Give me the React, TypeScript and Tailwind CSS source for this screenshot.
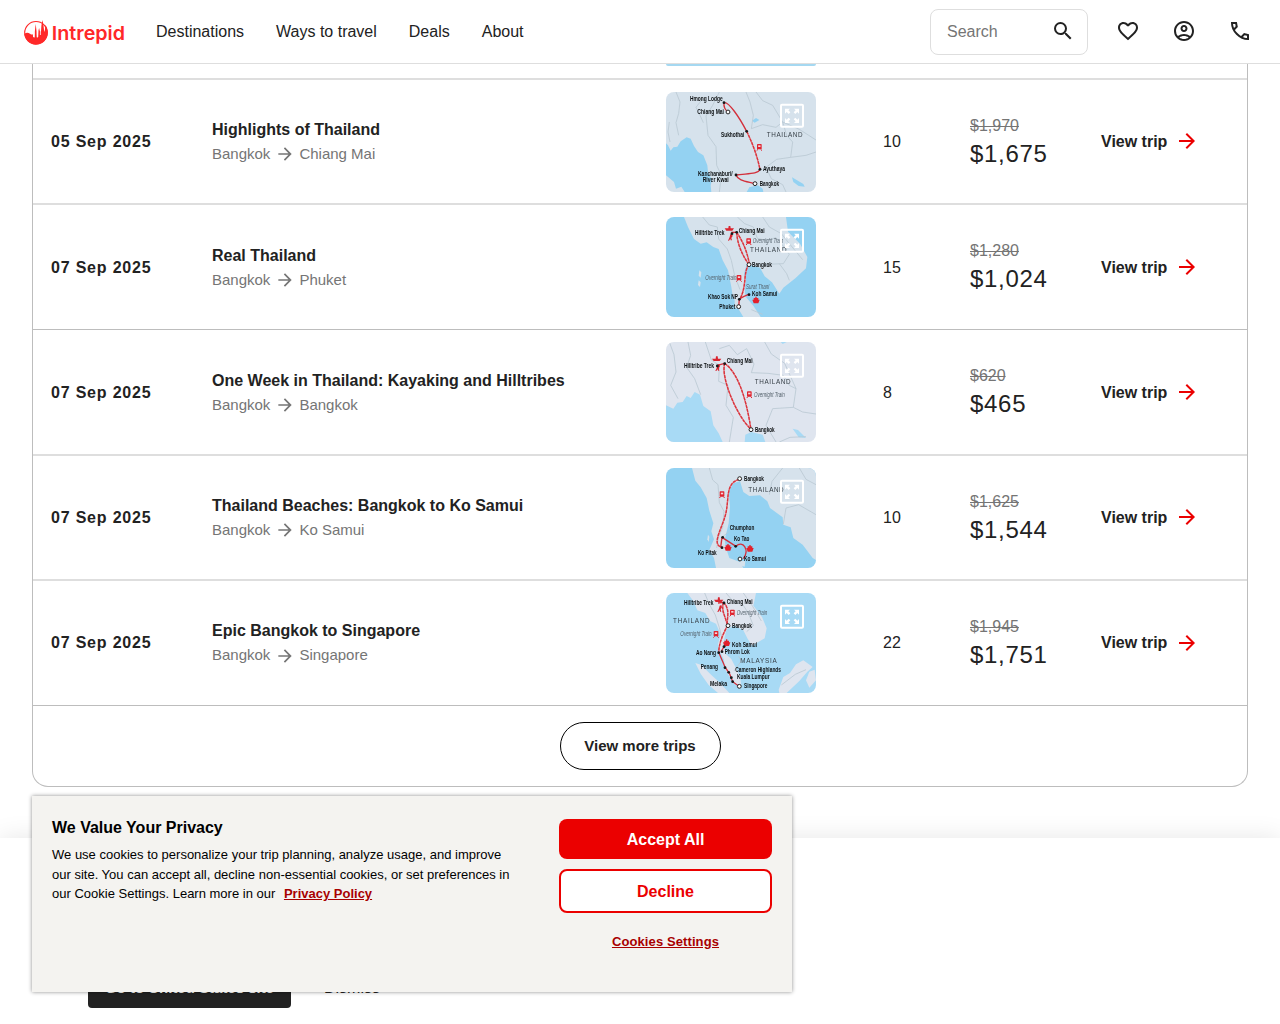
import React from "react";
import { MdSearch, MdFavoriteBorder, MdOutlineAccountCircle, MdArrowForward } from "react-icons/md";

type Label = { x: number; y: number; w: number; t: string; kind?: "country" | "note" };
type MapArt = {
  land: string;
  sea: string;
  bg: string;
  shapes: string[];
  waters?: string[];
  borders: string[];
  routes: string[];
  dashed?: string[];
  dots: [number, number][];
  rings: [number, number][];
  trains?: [number, number][];
  boats?: [number, number][];
  kayak?: [number, number];
  labels: Label[];
};

const highlights: MapArt = {
  land: "#d6e2ec", sea: "#94d2f2", bg: "#d6e2ec",
  shapes: [],
  waters: [
    "M0 154 L6 160 L14 176 L22 166 L34 164 L44 148 L62 136 L74 140 L84 162 L96 180 L112 190 L124 220 L126 240 L138 264 L134 280 L136 300 L56 300 L46 284 L30 290 L24 270 L0 250Z",
    "M242 300 L250 286 L276 280 L290 290 L292 300Z",
    "M378 256 L392 264 L412 276 L416 284 L398 282 L382 270Z",
    "M258 86 L270 78 L280 84 L266 92Z",
  ],
  borders: [
    "M30 0 L42 30 L38 64 L30 92 L38 130",
    "M10 90 L6 120 L12 150",
    "M110 20 L90 46 L102 70 L112 92",
    "M160 0 L140 40 L120 72 L126 130 L150 164 L152 220 L166 250 L160 300",
    "M240 0 L252 30 L262 70 L256 110 L290 98 L330 106 L350 90 L362 130 L380 150 L374 196 L332 202 L300 226",
    "M270 0 L290 26 L320 40 L350 90 L400 112 L450 144",
    "M374 196 L420 190 L450 180",
    "M300 226 L316 260 L350 278 L360 300",
  ],
  routes: [
    "M174 32 Q172 50 186 60",
    "M174 32 C188 28 220 76 242 118",
    "M282 232 C276 248 240 244 210 249 C216 266 240 268 266 275",
  ],
  dashed: ["M242 118 Q270 174 282 232"],
  dots: [[174, 32], [242, 118], [282, 232], [210, 249]],
  rings: [[186, 60], [267, 275]],
  trains: [[280, 166]],
  labels: [
    { x: 72, y: 28, w: 98, t: "Hmong Lodge" },
    { x: 94, y: 67, w: 80, t: "Chiang Mai" },
    { x: 165, y: 134, w: 70, t: "Sukhothai" },
    { x: 302, y: 134, w: 108, t: "THAILAND", kind: "country" },
    { x: 291, y: 238, w: 66, t: "Ayuthaya" },
    { x: 96, y: 252, w: 104, t: "Kanchanaburi/" },
    { x: 110, y: 270, w: 78, t: "River Kwai" },
    { x: 281, y: 281, w: 58, t: "Bangkok" },
  ],
};

const real: MapArt = {
  land: "#d6e2ec", sea: "#94d2f2", bg: "#94d2f2",
  shapes: [
    "M54 0 L66 30 L84 66 L104 80 L122 76 L142 90 L158 96 L170 130 L186 160 L196 210 L200 236 L214 270 L232 300 L284 300 L262 266 L238 238 L236 212 L240 190 L234 170 L242 142 L264 148 L282 152 L296 178 L318 196 L340 230 L352 212 L388 184 L420 154 L424 120 L402 80 L366 44 L360 0Z",
    "M206 252 L216 256 L212 276 L206 270Z",
    "M100 160 L106 166 L104 182 L98 176Z",
    "M98 190 L104 196 L102 210 L96 204Z",
  ],
  borders: [
    "M110 0 L130 24 L154 30 L158 66 L184 96 L196 130 L206 176 L222 218",
    "M214 0 L236 20 L262 30 L274 64 L300 70 L330 62 L354 90 L370 112 L352 140 L300 142 L282 152",
    "M290 0 L310 30 L346 50 L370 80 L410 128",
    "M340 140 L362 170 L370 190",
    "M256 278 L290 292",
  ],
  routes: ["M196 46 L212 46", "M220 246 Q232 238 248 232", "M220 246 L218 270"],
  dashed: [
    "M212 46 C214 80 226 110 248 142",
    "M212 46 C226 66 242 96 250 140",
    "M248 142 C230 172 244 204 222 246",
  ],
  dots: [[212, 46], [220, 247], [249, 233], [198, 50]],
  rings: [[249, 143], [218, 269]],
  trains: [[248, 74], [219, 184]],
  boats: [[270, 250]],
  kayak: [190, 38],
  labels: [
    { x: 87, y: 54, w: 88, t: "Hilltribe Trek" },
    { x: 218, y: 47, w: 78, t: "Chiang Mai" },
    { x: 260, y: 79, w: 92, t: "Overnight Train", kind: "note" },
    { x: 252, y: 106, w: 110, t: "THAILAND", kind: "country" },
    { x: 258, y: 150, w: 60, t: "Bangkok" },
    { x: 118, y: 190, w: 94, t: "Overnight Train", kind: "note" },
    { x: 240, y: 217, w: 70, t: "Surat Thani", kind: "note" },
    { x: 126, y: 247, w: 90, t: "Khao Sok NP" },
    { x: 258, y: 236, w: 76, t: "Koh Samui" },
    { x: 160, y: 275, w: 48, t: "Phuket" },
  ],
};

const week: MapArt = {
  land: "#dfe5ef", sea: "#a8daf5", bg: "#dfe5ef",
  shapes: [],
  waters: [
    "M0 190 L22 200 L34 182 L50 180 L62 162 L74 168 L86 150 L102 158 L112 192 L134 208 L142 250 L158 274 L170 300 L0 300Z",
    "M236 300 L238 278 L256 270 L290 278 L298 300Z",
    "M380 260 L396 264 L420 288 L398 286Z",
    "M344 0 L350 6 L362 0Z",
  ],
  borders: [
    "M10 0 L24 38 L30 90 L14 130 L36 170",
    "M66 0 L74 40 L62 76 L86 110 L104 158",
    "M118 0 L136 54 L160 70 L158 118 L186 130 L180 190 L202 226 L190 300",
    "M160 20 L190 10 L214 38 L242 20 L264 66 L256 92 L306 94 L352 100 L370 130 L390 140 L382 196 L320 200 L300 250 L330 300",
    "M296 0 L316 36 L356 64 L390 140",
    "M450 216 L410 210 L382 196",
    "M340 300 L372 286 L420 284",
  ],
  routes: ["M154 70 L176 64", "M154 74 L158 82"],
  dashed: ["M176 64 C164 104 210 220 255 262", "M176 64 C212 90 238 154 255 262"],
  dots: [[154, 72], [176, 65]],
  rings: [[255, 263]],
  trains: [[250, 158]],
  kayak: [152, 54],
  labels: [
    { x: 54, y: 77, w: 90, t: "Hilltribe Trek" },
    { x: 182, y: 64, w: 78, t: "Chiang Mai" },
    { x: 266, y: 126, w: 108, t: "THAILAND", kind: "country" },
    { x: 264, y: 164, w: 92, t: "Overnight Train", kind: "note" },
    { x: 267, y: 269, w: 59, t: "Bangkok" },
  ],
};

const beaches: MapArt = {
  land: "#d6e2ec", sea: "#94d2f2", bg: "#94d2f2",
  shapes: [
    "M78 0 L88 38 L104 58 L122 90 L130 128 L142 166 L136 190 L144 214 L130 246 L144 270 L150 300 L232 300 L222 282 L190 270 L180 240 L176 216 L188 166 L192 116 L188 70 L202 46 L222 40 L232 72 L250 84 L282 82 L304 100 L312 120 L350 148 L352 170 L374 178 L382 210 L410 230 L440 270 L450 276 L450 0Z",
    "M222 278 L238 280 L236 296 L222 292Z",
    "M126 200 L130 206 L128 222 L124 214Z",
  ],
  borders: [
    "M130 0 L140 36 L156 50 L160 104 L174 130 L170 178 L158 206 L152 240",
    "M310 80 L318 40 L350 0",
    "M352 168 L360 120 L398 110 L450 140",
    "M400 0 L420 34 L450 50",
    "M190 190 L170 206", "M218 220 L210 234",
  ],
  routes: ["M168 208 L210 235 C230 214 252 246 232 272", "M168 208 L164 238"],
  dashed: ["M220 34 C180 44 188 90 182 122 C178 168 130 230 168 238"],
  dots: [[170, 208], [168, 239], [209, 235]],
  rings: [[221, 32], [222, 273]],
  trains: [[168, 80]],
  boats: [[186, 239], [252, 242]],
  labels: [
    { x: 234, y: 38, w: 60, t: "Bangkok" },
    { x: 247, y: 72, w: 106, t: "THAILAND", kind: "country" },
    { x: 191, y: 187, w: 74, t: "Chumphon" },
    { x: 204, y: 219, w: 46, t: "Ko Tao" },
    { x: 96, y: 262, w: 56, t: "Ko Pitak" },
    { x: 234, y: 280, w: 66, t: "Ko Samui" },
  ],
};

const epic: MapArt = {
  land: "#dfe5ef", sea: "#a8daf5", bg: "#a8daf5",
  shapes: [
    "M64 0 L82 24 L94 52 L118 60 L132 84 L150 92 L164 124 L156 154 L162 176 L174 200 L176 226 L190 250 L206 272 L226 278 L222 250 L210 226 L196 198 L180 184 L172 160 L176 132 L182 108 L204 98 L232 112 L244 136 L258 158 L296 136 L302 106 L288 72 L262 38 L270 0Z",
    "M88 210 L106 216 L136 246 L160 268 L190 300 L156 300 L128 276 L104 242Z",
    "M338 290 L352 252 L372 240 L390 214 L412 202 L440 222 L424 236 L400 264 L362 300 L340 300Z",
    "M430 236 L446 230 L450 262 L430 284 L420 262Z",
  ],
  borders: [
    "M116 0 L130 34 L148 66 L160 104 L168 136",
    "M180 0 L204 28 L230 34 L248 62 L262 98 L242 116",
    "M232 0 L260 40 L286 84",
    "M204 234 L226 204 L218 190",
    "M346 276 L388 244 L420 230",
  ],
  routes: ["M158 178 L178 224 L190 240 L200 266 L218 279", "M156 30 L172 28", "M166 174 L174 162 L182 156"],
  dashed: ["M172 28 C164 56 180 70 184 98", "M172 28 C194 48 182 74 184 98 C176 116 160 140 158 178"],
  dots: [[174, 30], [158, 179], [168, 176], [177, 224], [188, 238], [196, 254], [200, 266], [174, 161]],
  rings: [[186, 98], [220, 280]],
  trains: [[199, 60], [150, 124]],
  boats: [[182, 150]],
  kayak: [158, 24],
  labels: [
    { x: 54, y: 37, w: 88, t: "Hilltribe Trek" },
    { x: 182, y: 34, w: 78, t: "Chiang Mai" },
    { x: 212, y: 65, w: 92, t: "Overnight Train", kind: "note" },
    { x: 21, y: 91, w: 110, t: "THAILAND", kind: "country" },
    { x: 198, y: 105, w: 60, t: "Bangkok" },
    { x: 43, y: 129, w: 94, t: "Overnight Train", kind: "note" },
    { x: 198, y: 162, w: 75, t: "Koh Samui" },
    { x: 90, y: 185, w: 60, t: "Ao Nang" },
    { x: 176, y: 184, w: 75, t: "Phrom Lok" },
    { x: 223, y: 210, w: 109, t: "MALAYSIA", kind: "country" },
    { x: 104, y: 229, w: 52, t: "Penang" },
    { x: 208, y: 237, w: 137, t: "Cameron Highlands" },
    { x: 213, y: 258, w: 98, t: "Kuala Lumpur" },
    { x: 132, y: 280, w: 51, t: "Melaka" },
    { x: 234, y: 286, w: 70, t: "Singapore" },
  ],
};

function RouteMap({ art }: { art: MapArt }) {
  return (
    <svg viewBox="0 0 450 300" className="h-[100px] w-[150px] rounded-lg" fontFamily="'Liberation Sans', Arial, sans-serif">
      <rect width="450" height="300" fill={art.bg} />
      <g className="blur-[1.2px]">
        {art.shapes.map((d) => <path key={d} d={d} fill={art.land} />)}
        {art.waters?.map((d) => <path key={d} d={d} fill={art.sea} />)}
        {art.borders.map((d) => <path key={d} d={d} fill="none" stroke="#b9c8d2" strokeWidth="2.4" />)}
        {art.dashed?.map((d) => (
          <g key={d} fill="none">
            <path d={d} stroke="#e27c83" strokeWidth="4" />
            <path d={d} stroke="#d9343d" strokeWidth="4" strokeDasharray="9 3" />
          </g>
        ))}
        {art.routes.map((d) => <path key={d} d={d} fill="none" stroke="#d32f3a" strokeWidth="4" />)}
        {art.trains?.map(([x, y]) => (
          <g key={x} transform={`translate(${x} ${y})`}>
            <rect x="-7" y="-10" width="14" height="16" rx="2" fill="#e0242f" />
            <rect x="-3.500" y="-6" width="7" height="5" fill="#f5d5da" />
            <path d="M-4 6 L-8 10 M4 6 L8 10" stroke="#e0242f" strokeWidth="3" />
          </g>
        ))}
        {art.boats?.map(([x, y]) => (
          <path key={x} transform={`translate(${x} ${y})`} d="M-2-11H2V-7H7V-2H11L7 9H-7L-11-2H-7V-7H-2Z" fill="#e3202b" />
        ))}
        {art.kayak && (
          <g transform={`translate(${art.kayak[0]} ${art.kayak[1]})`} fill="#d9242f">
            <path d="M-14-4H-3L-2-11H3L4-4H14L9 3H-9Z" />
            <path d="M3 14 L8 12 L10 19 L6 25 L8 32 H4 L3 27 L-1 33 H-4 L1 22Z" />
          </g>
        )}
        {art.labels.map((l) => (
          <text
            key={`${l.t}${l.y}`}
            x={l.x}
            y={l.y}
            textLength={l.w}
            lengthAdjust={l.kind === "country" ? "spacing" : "spacingAndGlyphs"}
            fontSize={l.kind === "country" ? 19 : 19.5}
            fontWeight={l.kind ? 400 : 700}
            fontStyle={l.kind === "note" ? "italic" : "normal"}
            fill={l.kind === "note" ? "#54616b" : l.kind ? "#343d44" : "#0c0f11"}
          >
            {l.t}
          </text>
        ))}
        {art.dots.map(([x, y]) => <circle key={`${x}-${y}`} cx={x} cy={y} r="4.200" fill="#16191b" />)}
        {art.rings.map(([x, y]) => <circle key={`${x}-${y}`} cx={x} cy={y} r="5.800" fill="#fff" stroke="#222" strokeWidth="3" />)}
      </g>
      <rect x="345" y="38" width="66" height="66" rx="3" fill="none" stroke="#fff" strokeWidth="6" />
      <path
        fill="#fff"
        d="M357 50h15l-5 5 6 6-5 5-6-6-5 5zM399 50v15l-5-5-6 6-5-5 6-6-5-5zM357 93v-15l5 5 6-6 5 5-6 6 5 5zM399 93h-15l5-5-6-6 5-5 6 6 5-5z"
      />
    </svg>
  );
}

function Logo() {
  return (
    <svg width="102" height="28" viewBox="0 0 102 28" className="shrink-0">
      <circle cx="12" cy="14.800" r="11.300" fill="none" stroke="#ff2828" strokeWidth="1.100" />
      <path
        transform="translate(0 .5)"
        fill="#ff2828"
        d="M.3 15.600Q3 13.300 6 15.300Q7 16.600 8.800 15.700L9.100 18.500L10.500 18.700L10.900 12.500L11.700 5.500L12.500 12.500L12.800 18.700L14.200 18.500L14.500 12L15.100 9.500L15.800 12.500L17 13L17.400 7L18.500 1.600L19.500 7L20 11.600L20.700 13.500L21.400 6.500C23 8.700 23.800 11.300 23.800 14.300A11.800 11.800 0 0 1 .3 15.600Z"
      />
      <path d="M10.100 14.500V19.500M13.400 14.500V19.500M16.400 13V17" stroke="#fff" strokeWidth=".8" />
      <text
        x="27.800" y="21.700" textLength="73.200" lengthAdjust="spacingAndGlyphs"
        fontFamily="Inter, sans-serif" fontWeight="600" fontSize="19" fill="#ff2828"
      >
        Intrepid
      </text>
    </svg>
  );
}

function PhoneIcon() {
  return (
    <svg width="24" height="24" viewBox="0 0 24 24" fill="currentColor">
      <path
        fillRule="evenodd"
        d="M21 21h-1.050q-3.125 0-6.175-1.362t-5.550-3.863-3.862-5.550T3 4.050V3h5.900l.925 5.025L6.975 10.900q.5.925 1.187 1.787t1.513 1.663q.775.775 1.625 1.438T13.100 17l2.900-2.900 5 1.025zM6.025 9l1.650-1.650L7.250 5H5.025q.125 1.025.350 2.025T6.025 9m8.950 8.950q.975.425 1.988.675T19 18.950v-2.200l-2.350-.475z"
      />
    </svg>
  );
}

const trips = [
  { date: "05 Sep 2025", name: "Highlights of Thailand", to: "Chiang Mai", days: 10, was: "$1,970", now: "$1,675", art: highlights, row: "h-[125px] border-t-2 border-[#dedede]", text: "", title: "pt-px" },
  { date: "07 Sep 2025", name: "Real Thailand", to: "Phuket", days: 15, was: "$1,280", now: "$1,024", art: real, row: "h-[126px] border-t-2 border-[#dedede]", text: "pt-px", title: "pt-px" },
  { date: "07 Sep 2025", name: "One Week in Thailand: Kayaking and Hilltribes", to: "Bangkok", days: 8, was: "$620", now: "$465", art: week, row: "h-[125px] border-t border-[#bdbdbd]", text: "pt-px", title: "pt-px" },
  { date: "07 Sep 2025", name: "Thailand Beaches: Bangkok to Ko Samui", to: "Ko Samui", days: 10, was: "$1,625", now: "$1,544", art: beaches, row: "h-[125px] border-t-2 border-[#dedede]", text: "", title: "pt-px" },
  { date: "07 Sep 2025", name: "Epic Bangkok to Singapore", to: "Singapore", days: 22, was: "$1,945", now: "$1,751", art: epic, row: "h-[126px] border-t-2 border-[#dedede]", text: "", title: "pb-px" },
];

export default function App() {
  return (
    <div className="relative flex h-[1024px] w-full flex-col overflow-hidden bg-white font-['Liberation_Sans',Arial,sans-serif] text-base text-[#222]">
      <header className="flex h-16 shrink-0 items-center border-b border-[#dedede] pl-6 pr-[28px]">
        <Logo />
        <nav className="ml-[30px] flex gap-8">
          <a>Destinations</a>
          <a>Ways to travel</a>
          <a>Deals</a>
          <a>About</a>
        </nav>
        <div className="ml-auto flex h-[46px] w-[158px] items-center justify-between rounded-lg border border-[#dedede] pl-4 pr-3">
          <span className="text-[#757575]">Search</span>
          <MdSearch size={24} className="-mt-px" />
        </div>
        <div className="-mt-px ml-7 flex gap-8">
          <MdFavoriteBorder size={24} />
          <MdOutlineAccountCircle size={24} />
          <PhoneIcon />
        </div>
      </header>

      <main className="mx-8 h-[723px] shrink-0 overflow-hidden rounded-b-2xl border-x border-b border-[#bdbdbd]">
        <div className="h-[14px]">
          <div className="ml-[633px] h-[2px] w-[150px] overflow-hidden rounded-b-lg bg-[#a5d8f1]" />
        </div>
        {trips.map((t) => (
          <div key={t.name} className={`flex items-center ${t.row}`}>
            <div className={`w-[161px] pl-[18px] font-bold tracking-[0.8px] ${t.text}`}>{t.date}</div>
            <div className={`w-[472px] pl-[18px] ${t.text}`}>
              <div className={`font-bold leading-6 ${t.title}`}>{t.name}</div>
              <div className="flex h-6 items-center text-[15px] text-[#757575]">
                Bangkok
                <MdArrowForward size={20} className="ml-[4.500px] mr-[4.500px]" />
                {t.to}
              </div>
            </div>
            <RouteMap art={t.art} />
            <div className={`w-[154px] pl-[67px] ${t.text}`}>{t.days}</div>
            <div className="w-[131px]">
              <div className="leading-6 text-[#757575] line-through">{t.was}</div>
              <div className="text-2xl leading-8 tracking-[.7px]">{t.now}</div>
            </div>
            <div className={`flex items-center gap-2 font-bold ${t.text}`}>
              View trip
              <MdArrowForward size={24} className="-mt-px text-[#eb0000]" />
            </div>
          </div>
        ))}
        <div className="flex h-[81px] items-center justify-center border-t border-[#bdbdbd]">
          <button className="h-12 w-[161px] rounded-full border border-black text-[15px] font-bold">View more trips</button>
        </div>
      </main>

      <aside className="absolute inset-x-0 bottom-0 h-[186px] bg-white shadow-[0_0_24px_rgba(0,0,0,.1)]">
        <div className="flex pl-[88px] pt-[130px]">
          <button className="h-10 w-[203px] rounded bg-[#222] text-[15px] font-bold text-white">Go to United States site</button>
          <button className="ml-[33px] h-10 text-base">Dismiss</button>
        </div>
      </aside>

      <section className="absolute bottom-8 left-8 flex h-[196px] w-[760px] bg-[#f4f3f0] px-5 text-black shadow-[0_0_4px_rgba(0,0,0,.45)]">
        <div className="w-[507px] pt-[21px]">
          <h2 className="font-bold leading-[22px]">We Value Your Privacy</h2>
          <p className="mt-[6px] w-[470px] text-[13px] leading-[19.5px]">
            We use cookies to personalize your trip planning, analyze usage, and improve our site. You can accept all, decline non-essential cookies, or set preferences in our Cookie Settings. Learn more in our{" "}
            <a className="ml-[5px] font-bold text-[#a80000] underline">Privacy Policy</a>
          </p>
        </div>
        <div className="flex w-[213px] flex-col items-center pt-[23px]">
          <button className="h-10 w-full rounded-lg bg-[#eb0000] pt-px font-bold text-white">Accept All</button>
          <button className="mt-[10px] h-11 w-full rounded-lg border-2 border-[#eb0000] bg-white pt-px font-bold text-[#eb0000]">Decline</button>
          <a className="mt-[19px] text-[13px] font-bold tracking-[.1px] text-[#a80000] underline">Cookies Settings</a>
        </div>
      </section>
    </div>
  );
}
